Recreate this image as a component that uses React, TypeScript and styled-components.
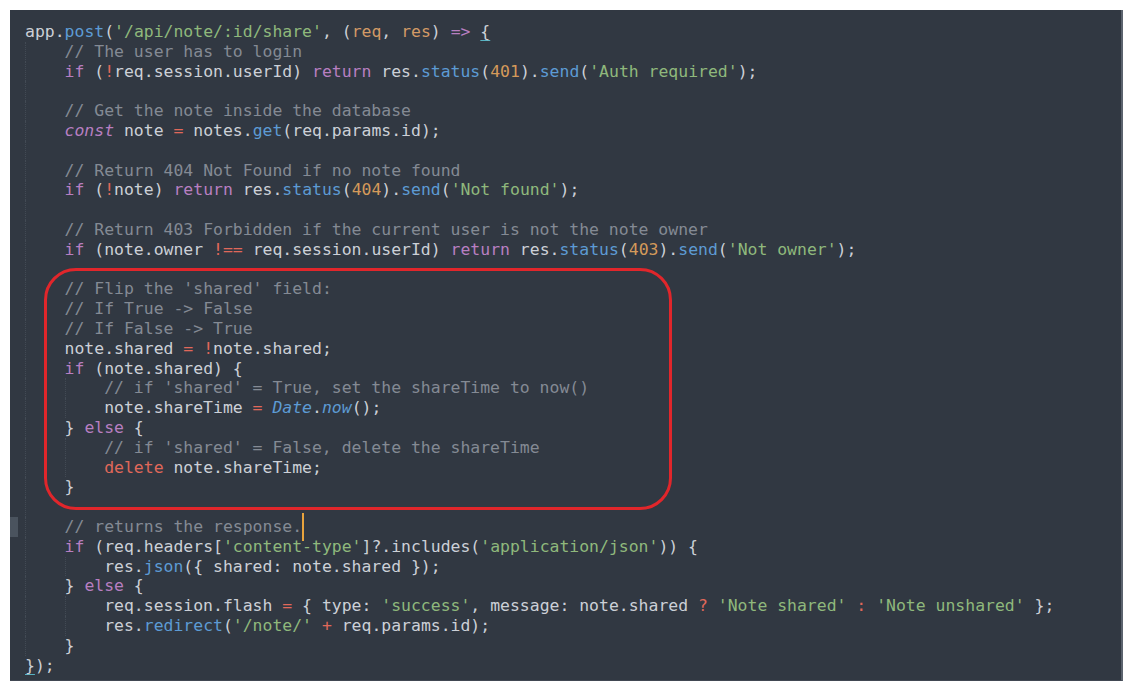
import React from "react";
import styled, { createGlobalStyle, css } from "styled-components";

type Kind = "p" | "c" | "k" | "ki" | "f" | "s" | "n" | "o" | "a" | "d" | "b" | "m";
type Tok = [Kind, string];
interface Line {
  indent: number;
  toks: Tok[];
  mark?: boolean;
  cursor?: boolean;
}

const palette: Record<Kind, string> = {
  p: "#ccd0d7",
  c: "#848a94",
  k: "#b87fc1",
  ki: "#b87fc1",
  f: "#5d9bd4",
  s: "#8fb87c",
  n: "#d49a5a",
  o: "#e0685a",
  a: "#d39a66",
  d: "#e0685a",
  b: "#5d9bd4",
  m: "#ccd0d7",
};

const lines: Line[] = [
  {
    indent: 0,
    toks: [
      ["p", "app."], ["f", "post"], ["p", "("], ["s", "'/api/note/:id/share'"], ["p", ", ("],
      ["a", "req"], ["p", ", "], ["a", "res"], ["p", ") "], ["k", "=>"], ["p", " "], ["m", "{"],
    ],
  },
  { indent: 1, toks: [["c", "// The user has to login"]] },
  {
    indent: 1,
    toks: [
      ["k", "if"], ["p", " ("], ["o", "!"], ["p", "req.session.userId) "], ["k", "return"], ["p", " res."],
      ["f", "status"], ["p", "("], ["n", "401"], ["p", ")."], ["f", "send"], ["p", "("], ["s", "'Auth required'"], ["p", ");"],
    ],
  },
  { indent: 1, toks: [] },
  { indent: 1, toks: [["c", "// Get the note inside the database"]] },
  {
    indent: 1,
    toks: [["ki", "const"], ["p", " note "], ["o", "="], ["p", " notes."], ["f", "get"], ["p", "(req.params.id);"]],
  },
  { indent: 1, toks: [] },
  { indent: 1, toks: [["c", "// Return 404 Not Found if no note found"]] },
  {
    indent: 1,
    toks: [
      ["k", "if"], ["p", " ("], ["o", "!"], ["p", "note) "], ["k", "return"], ["p", " res."], ["f", "status"], ["p", "("],
      ["n", "404"], ["p", ")."], ["f", "send"], ["p", "("], ["s", "'Not found'"], ["p", ");"],
    ],
  },
  { indent: 1, toks: [] },
  { indent: 1, toks: [["c", "// Return 403 Forbidden if the current user is not the note owner"]] },
  {
    indent: 1,
    toks: [
      ["k", "if"], ["p", " (note.owner "], ["o", "!=="], ["p", " req.session.userId) "], ["k", "return"], ["p", " res."],
      ["f", "status"], ["p", "("], ["n", "403"], ["p", ")."], ["f", "send"], ["p", "("], ["s", "'Not owner'"], ["p", ");"],
    ],
  },
  { indent: 1, toks: [] },
  { indent: 1, toks: [["c", "// Flip the 'shared' field:"]] },
  { indent: 1, toks: [["c", "// If True -> False"]] },
  { indent: 1, toks: [["c", "// If False -> True"]] },
  { indent: 1, toks: [["p", "note.shared "], ["o", "="], ["p", " "], ["o", "!"], ["p", "note.shared;"]] },
  { indent: 1, toks: [["k", "if"], ["p", " (note.shared) {"]] },
  { indent: 2, toks: [["c", "// if 'shared' = True, set the shareTime to now()"]] },
  { indent: 2, toks: [["p", "note.shareTime "], ["o", "="], ["p", " "], ["b", "Date"], ["p", "."], ["b", "now"], ["p", "();"]] },
  { indent: 1, toks: [["p", "} "], ["k", "else"], ["p", " {"]] },
  { indent: 2, toks: [["c", "// if 'shared' = False, delete the shareTime"]] },
  { indent: 2, toks: [["d", "delete"], ["p", " note.shareTime;"]] },
  { indent: 1, toks: [["p", "}"]] },
  { indent: 1, toks: [] },
  { indent: 1, toks: [["c", "// returns the response."]], mark: true, cursor: true },
  {
    indent: 1,
    toks: [
      ["k", "if"], ["p", " (req.headers["], ["s", "'content-type'"], ["p", "]?.includes("], ["s", "'application/json'"], ["p", ")) {"],
    ],
  },
  { indent: 2, toks: [["p", "res."], ["f", "json"], ["p", "({ shared: note.shared });"]] },
  { indent: 1, toks: [["p", "} "], ["k", "else"], ["p", " {"]] },
  {
    indent: 2,
    toks: [
      ["p", "req.session.flash "], ["o", "="], ["p", " { type: "], ["s", "'success'"], ["p", ", message: note.shared "],
      ["o", "?"], ["p", " "], ["s", "'Note shared'"], ["p", " "], ["o", ":"], ["p", " "], ["s", "'Note unshared'"], ["p", " };"],
    ],
  },
  {
    indent: 2,
    toks: [["p", "res."], ["f", "redirect"], ["p", "("], ["s", "'/note/'"], ["p", " "], ["o", "+"], ["p", " req.params.id);"]],
  },
  { indent: 1, toks: [["p", "}"]] },
  { indent: 0, toks: [["m", "}"], ["p", ");"]] },
];

const Global = createGlobalStyle`
  html, body {
    margin: 0;
    padding: 0;
    background: #ffffff;
  }
  body {
    padding: 10px;
  }
`;

const Panel = styled.div`
  position: relative;
  box-sizing: border-box;
  height: 671px;
  padding-top: 12px;
  background: #313842;
  border-right: 2px solid #5b636e;
  border-bottom: 1px solid #414852;
  font-family: "DejaVu Sans Mono", "Liberation Mono", monospace;
  font-size: 16.45px;
  line-height: 19.8px;
`;

const Row = styled.div`
  display: flex;
  height: 19.8px;
  white-space: pre;
`;

const Gutter = styled.div<{ $mark?: boolean }>`
  flex: none;
  width: 15px;
  display: flex;
  &::before {
    content: "";
    width: 8px;
    height: 100%;
    background: ${(p) => (p.$mark ? "#4a535e" : "transparent")};
  }
`;

const Guide = styled.span`
  display: inline-block;
  box-sizing: border-box;
  width: 4ch;
  height: 100%;
  border-left: 1px dotted #424a54;
  vertical-align: top;
`;

const Tk = styled.span<{ $k: Kind }>`
  color: ${(p) => palette[p.$k]};
  font-style: ${(p) => (p.$k === "ki" || p.$k === "b" ? "italic" : "normal")};
  ${(p) =>
    p.$k === "m" &&
    css`
      text-decoration: underline;
      text-decoration-color: #58b3c2;
      text-underline-offset: 3px;
    `}
`;

const Cursor = styled.span`
  position: relative;
  display: inline-block;
  width: 0;
  height: 100%;
  vertical-align: top;
  &::after {
    content: "";
    position: absolute;
    left: 0;
    top: -4px;
    width: 2px;
    height: 28px;
    background: #e8a33d;
  }
`;

const Annotation = styled.div`
  position: absolute;
  left: 34px;
  top: 258px;
  width: 628px;
  height: 242px;
  box-sizing: border-box;
  border: 3px solid #e1262b;
  border-radius: 32px;
  pointer-events: none;
`;

export default function App() {
  return (
    <>
      <Global />
      <Panel>
        {lines.map((line, i) => (
          <Row key={i}>
            <Gutter $mark={line.mark} />
            {Array.from({ length: line.indent }).map((_, g) => (
              <Guide key={g} />
            ))}
            {line.toks.map(([k, text], j) => (
              <Tk key={j} $k={k}>
                {text}
              </Tk>
            ))}
            {line.cursor && <Cursor />}
          </Row>
        ))}
        <Annotation />
      </Panel>
    </>
  );
}
